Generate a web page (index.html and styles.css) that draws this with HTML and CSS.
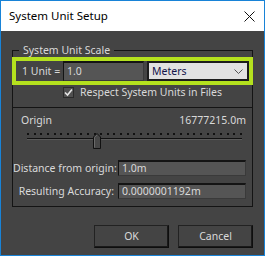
FILE: index.html
```html
<!DOCTYPE html>
<html lang="en">
<head>
  <meta charset="UTF-8" />
  <meta name="viewport" content="width=device-width, initial-scale=1.0"/>
  <title>System Unit Setup</title>
  <link rel="stylesheet" href="styles.css">
</head>
<body>
  <div class="dialog">
    <header class="titlebar">
      <span class="title">System Unit Setup</span>
      <svg class="close" width="11" height="11" viewBox="0 0 11 11">
        <path d="M0.5 0.5L10.5 10.5M10.5 0.5L0.5 10.5" stroke="#111" stroke-width="1"/>
      </svg>
    </header>

    <div class="content">
      <fieldset class="group">
        <legend>System Unit Scale</legend>

        <!-- fila resaltada -->
        <div class="unit-row">
          <span class="unit-label">1 Unit =</span>
          <div class="field unit-value">1.0</div>
          <div class="dropdown">
            <span>Meters</span>
            <svg width="9" height="5" viewBox="0 0 9 5"><path d="M0.5 0.5L4.5 4.5L8.5 0.5" fill="none" stroke="#555" stroke-width="1"/></svg>
          </div>
        </div>

        <div class="check-row">
          <span class="checkbox">
            <svg width="9" height="9" viewBox="0 0 9 9"><path d="M1 4.5L3.5 7L8 1.5" fill="none" stroke="#e6e6e6" stroke-width="1.6"/></svg>
          </span>
          <span>Respect System Units in Files</span>
        </div>

        <div class="divider"></div>

        <div class="origin-head">
          <span>Origin</span>
          <span>16777215.0m</span>
        </div>

        <div class="slider">
          <div class="ticks"></div>
          <div class="track"></div>
          <svg class="thumb" width="8" height="16" viewBox="0 0 8 16">
            <path d="M0.5 15.5V4L4 0.5L7.5 4V15.5Z" fill="#474747" stroke="#111" stroke-width="1"/>
            <path d="M1.5 14.5V4.4L4 1.9" fill="none" stroke="#6a6a6a" stroke-width="1"/>
          </svg>
        </div>

        <div class="form-row">
          <label>Distance from origin:</label>
          <div class="field">1.0m</div>
        </div>
        <div class="form-row">
          <label>Resulting Accuracy:</label>
          <div class="field">0.0000001192m</div>
        </div>
      </fieldset>

      <div class="buttons">
        <button>OK</button>
        <button>Cancel</button>
      </div>
    </div>
  </div>
</body>
</html>
```

FILE: styles.css
```css
/* colores */
:root {
  --bg: #444444;
  --text: #d9d9d9;
  --line: #141414;
  --field: #555555;
  --accent: #b4e11e;
  --frame: #1883d7;
}
* { box-sizing: border-box; margin: 0; padding: 0; }
body {
  background: var(--bg);
  font-family: "Noto Sans", "Open Sans", sans-serif;
  font-size: 10.5px;
  line-height: 15px;
  color: var(--text);
  white-space: nowrap;
}
.dialog {
  width: 265px;
  height: 256px;
  border: 1px solid var(--frame);
  display: flex;
  flex-direction: column;
}

/* TITULO */
.titlebar {
  height: 30px;
  background: #ffffff;
  color: #000;
  font-size: 11.5px;
  display: flex;
  align-items: center;
  justify-content: space-between;
  padding: 0 9px 0 8px;
}
.title { margin-top: -1px; }
.close { margin-top: 1px; }

/* CONTENIDO */
.content {
  flex: 1;
  padding: 11px 11px 0 11px;
}
.group {
  border: 1px solid var(--line);
  padding: 0 0 7px 0;
  min-width: 0;
}
.group legend {
  margin-left: 6px;
  padding: 0 4px;
  line-height: 16px;
}

/* FILA RESALTADA */
.unit-row {
  display: flex;
  align-items: center;
  margin: -1px -1px 0 -1px;
  border: 4px solid var(--accent);
  height: 28px;
}
.unit-label {
  width: 47px;
  padding-left: 6px;
}
.field {
  background: var(--field);
  border-top: 2px solid var(--line);
  border-left: 1px solid var(--line);
  border-right: 1px solid #3a3a3a;
  border-bottom: 1px solid #3a3a3a;
  height: 16px;
  line-height: 12px;
  padding-left: 3px;
}
.unit-value {
  width: 81px;
  height: 20px;
  line-height: 17px;
  margin-right: 3px;
}
.dropdown {
  flex: 1;
  height: 20px;
  background: #e1e1e1;
  border: 2px solid #1c1c1c;
  color: #14144a;
  display: flex;
  align-items: center;
  justify-content: space-between;
  padding: 0 4px 0 3px;
}

/* CASILLA */
.check-row {
  display: flex;
  align-items: center;
  height: 15px;
  padding-left: 50px;
  gap: 6px;
}
.checkbox {
  width: 11px;
  height: 11px;
  background: #505050;
  border: 1px solid #2a2a2a;
  display: flex;
  align-items: center;
  justify-content: center;
}

.divider {
  height: 1px;
  background: var(--line);
  margin-top: 7px;
}

/* ORIGEN */
.origin-head {
  display: flex;
  justify-content: space-between;
  padding: 0 6px 0 8px;
  margin-top: 5px;
}
.slider {
  position: relative;
  height: 20px;
  margin: 4px 10px 0 14px;
}
.ticks {
  height: 2px;
  margin-top: 5px;
  background: repeating-linear-gradient(to right, #111 0 2px, transparent 2px 6.65px);
}
.track {
  height: 2px;
  margin-top: 3px;
  border-top: 1px solid #111;
  border-bottom: 1px solid #5a5a5a;
}
.thumb {
  position: absolute;
  left: 66px;
  top: 0;
}

/* CAMPOS */
.form-row {
  display: flex;
  align-items: center;
  margin-top: 7px;
  padding-right: 6px;
}
.form-row label {
  width: 103px;
  text-align: right;
  padding-right: 2px;
}
.form-row .field {
  flex: 1;
  margin-left: 2px;
}

/* BOTONES */
.buttons {
  display: flex;
  justify-content: flex-end;
  gap: 9px;
  margin-top: 18px;
}
.buttons button {
  width: 75px;
  height: 23px;
  background: var(--bg);
  color: var(--text);
  font: inherit;
  border: 1px solid #222;
  border-right-color: #0e0e0e;
  border-bottom-color: #0e0e0e;
  box-shadow: inset -1px -1px 0 #1a1a1a;
}
```
